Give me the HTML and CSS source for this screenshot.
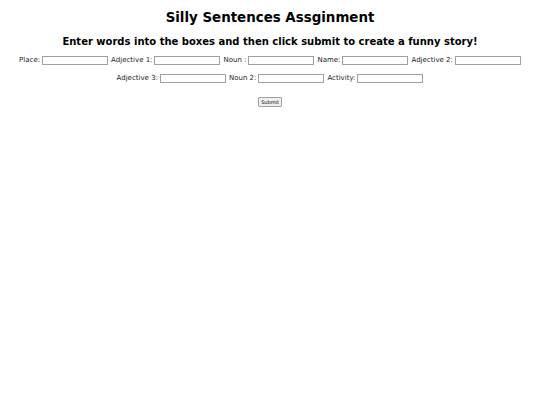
FILE: index.html
```
<!DOCTYPE html>
<html>
<head>
<meta charset="utf-8">
<link rel="stylesheet" href="styles.css">
</head>
<body>
<h1 class="title">Silly Sentences Assginment</h1>
<h2 class="subtitle">Enter words into the boxes and then click submit to create a funny story!</h2>
<form class="form">
  <div class="row">
    <label>Place: <input type="text"></label>
    <label>Adjective 1: <input type="text"></label>
    <label>Noun : <input type="text"></label>
    <label>Name: <input type="text"></label>
    <label>Adjective 2: <input type="text"></label>
  </div>
  <div class="row">
    <label>Adjective 3: <input type="text"></label>
    <label>Noun 2: <input type="text"></label>
    <label>Activity: <input type="text"></label>
  </div>
  <div class="row submit-row">
    <button type="button" class="submit">Submit</button>
  </div>
</form>
</body>
</html>
```
FILE: styles.css
```
html, body {
  margin: 0;
  padding: 0;
  background: #fff;
}
body {
  font-family: "DejaVu Sans", sans-serif;
  color: #000;
  text-align: center;
}
.title {
  font-size: 13.4px;
  font-weight: bold;
  margin: 9px 0 0;
  line-height: 17px;
}
.subtitle {
  font-size: 10px;
  font-weight: bold;
  margin: 9px 0 0;
  line-height: 14px;
}
.form {
  margin-top: 7px;
}
.row {
  display: flex;
  justify-content: center;
  gap: 3px;
  font-size: 7px;
  line-height: 9px;
  margin-bottom: 9px;
  color: #222;
}
.row label {
  display: flex;
  align-items: center;
  gap: 2px;
}
.row input {
  width: 64px;
  height: 7px;
  border: 1px solid #a0a0a0;
  padding: 0;
  margin: 0;
  font-size: 7px;
}
.submit-row {
  margin-top: 14px;
}
.submit {
  font-family: "DejaVu Sans", sans-serif;
  font-size: 5px;
  padding: 1px 2px;
  height: 10px;
  border: 1px solid #a0a0a0;
  border-radius: 1px;
  background: #efefef;
  color: #000;
}
```
